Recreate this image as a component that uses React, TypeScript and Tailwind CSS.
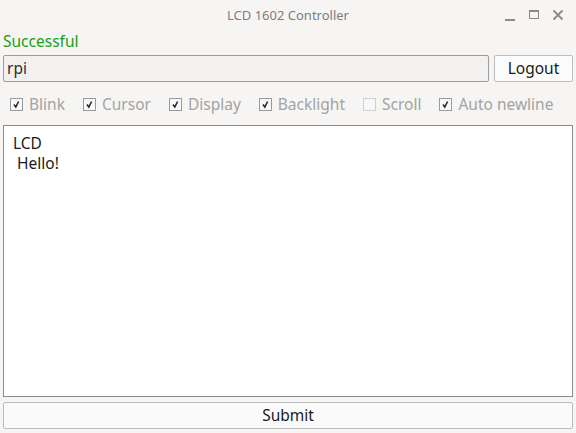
const options = [
  { label: 'Blink', checked: true },
  { label: 'Cursor', checked: true },
  { label: 'Display', checked: true },
  { label: 'Backlight', checked: true },
  { label: 'Scroll', checked: false },
  { label: 'Auto newline', checked: true },
];

function CheckBox({ label, checked }: { label: string; checked: boolean }) {
  return (
    <div className="flex items-center gap-[6px]">
      <div
        className={`w-[13px] h-[13px] border flex items-center justify-center bg-[#f7f7f7] ${
          checked ? 'border-[#9a9a9a]' : 'border-[#d0d0d0]'
        }`}
      >
        {checked && (
          <svg width="9" height="9" viewBox="0 0 9 9">
            <path d="M2 4.5 L3.8 7 L6.6 1.5" stroke="#222" strokeWidth="1.5" fill="none" />
          </svg>
        )}
      </div>
      <span className="text-[15.5px] text-[#a3a3a3]">{label}</span>
    </div>
  );
}

export default function App() {
  return (
    <div
      className="w-[576px] h-[433px] bg-[#f6f5f4] flex flex-col overflow-hidden"
      style={{ fontFamily: '"Noto Sans", "Open Sans", sans-serif' }}
    >
      {/* Title bar */}
      <div className="h-[31px] flex items-center relative shrink-0">
        <div className="flex-1 text-center text-[13px] text-[#7d7d7d] pt-[1px]">LCD 1602 Controller</div>
        <div className="absolute right-[12px] top-[8px] flex items-center gap-[12px]">
          <svg width="12" height="14" viewBox="0 0 12 14">
            <rect x="1" y="11" width="10" height="2" fill="#8a8a8a" />
          </svg>
          <svg width="12" height="14" viewBox="0 0 12 14">
            <rect x="1.5" y="2.5" width="9" height="8" stroke="#8a8a8a" strokeWidth="1" fill="none" />
            <rect x="1.5" y="2.5" width="9" height="1.5" fill="#8a8a8a" />
          </svg>
          <svg width="12" height="14" viewBox="0 0 12 14">
            <path d="M1.5 2.5 L10.5 11.5 M10.5 2.5 L1.5 11.5" stroke="#8a8a8a" strokeWidth="1.8" />
          </svg>
        </div>
      </div>

      <div className="flex-1 flex flex-col px-[3px] pb-[4px]">
        <div className="text-[15.5px] text-[#18a018] leading-[20px] h-[24px]">Successful</div>

        <div className="flex gap-[5px] h-[27px]">
          <div className="flex-1 border border-[#9c9c9c] rounded-[2px] bg-[#f2f1f0] flex items-center px-[3px] text-[15.5px] text-[#2e2e2e]">
            rpi
          </div>
          <button className="w-[79px] border border-[#bdbdbd] rounded-[2px] bg-[#fbfbfb] text-[15.5px] text-[#1a1a1a]">
            Logout
          </button>
        </div>

        <div className="flex items-center gap-[18px] pl-[7px] pt-[2px] h-[43px]">
          {options.map((o) => (
            <CheckBox key={o.label} label={o.label} checked={o.checked} />
          ))}
        </div>

        <div className="h-[272px] border border-[#8a8a8a] bg-white px-[9px] pt-[7px] text-[15.5px] leading-[20px] text-[#1a1a1a] whitespace-pre">
          {'LCD\n Hello!'}
        </div>

        <button className="mt-[5px] h-[27px] border border-[#bdbdbd] rounded-[2px] bg-[#fafafa] text-[15.5px] text-[#1a1a1a]">
          Submit
        </button>
      </div>
    </div>
  );
}
